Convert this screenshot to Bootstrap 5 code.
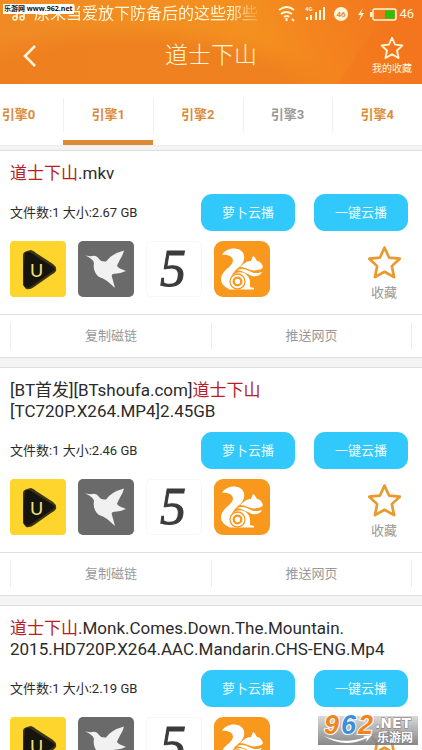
<!DOCTYPE html>
<html lang="zh-CN">
<head>
<meta charset="utf-8">
<meta name="viewport" content="width=device-width, initial-scale=1">
<title>道士下山</title>
<link href="https://cdn.jsdelivr.net/npm/bootstrap@5.3.0/dist/css/bootstrap.min.css" rel="stylesheet">
<style>
  body { font-family: Roboto, "Noto Sans CJK SC", sans-serif; background: #f4f4f4; color: #2b2b2b; }
  .app-head { color: #fff6d8; background:
      linear-gradient(125deg, transparent 82%, #f4711c55 82.5%),
      linear-gradient(40deg, transparent 62%, #ef701d66 90%),
      radial-gradient(ellipse at 30% 130%, #ee7d1fcc 0 42%, transparent 55%),
      linear-gradient(90deg, #f08a24, #f4901f 60%, #f57a1e); }
  .status { height: 28px; font-size: 13px; line-height: 28px; }
  .ticker { width: 258px; padding-left: 12px; font-size: 16px; font-weight: 400; white-space: nowrap;
      -webkit-mask-image: linear-gradient(90deg, #000 88%, #0003); mask-image: linear-gradient(90deg, #000 88%, #0003); }
  .site-tag { top: 4px; left: 3px; height: 10px; padding: 0 1px; background: #fff; color: #111;
      font: bold 7px/10px "Open Sans", "Noto Sans CJK SC", sans-serif; white-space: nowrap; }
  .title-bar { height: 56px; }
  .title-bar h1 { font-size: 23px; line-height: 56px; font-weight: 300; }
  .side { width: 60px; color: inherit; }
  .fav-top { font-size: 10px; line-height: 18px; }
  .tabs { height: 62px; background: #fff; border-bottom: 1px solid #ececec; }
  .tab-item { flex: 0 0 21.25%; padding-top: 6px; font-size: 13px; font-weight: 700; color: #db8a38; border-bottom: 5px solid transparent; }
  .tab-item + .tab-item { background: linear-gradient(#f0f0f0, #f0f0f0) 0 14px / 1px 34px no-repeat; }
  .tab-item.current { border-bottom-color: #dd8a35; }
  .tab-item.muted { color: #999; }
  .entries { gap: 9px; padding-top: 4px; }
  .entry { background: #fff; border-top: 1px solid #dedede; border-bottom: 1px solid #dedede; }
  .entry-main { padding: 12px 10px; }
  .entry h2 { font-size: 17px; line-height: 21px; font-weight: 400; margin-bottom: 10px; }
  .entry h2 em { color: #b92025; font-style: normal; }
  .meta { font-size: 13px; }
  .actions { gap: 19px; margin-right: 4px; }
  .play { width: 94px; height: 37px; border: 0; border-radius: 11px; background: #31c8fb; color: #e9fbff; font-size: 13px; }
  .apps { gap: 12px; margin-top: 10px; }
  .app-btn, .app-btn svg { width: 56px; height: 56px; }
  .fav { width: 50px; color: #999; font-size: 13px; line-height: 18px; margin-right: 3px; padding-top: 14px; gap: 4px; }
  .entry-foot { height: 43px; margin: 0; border-top: 1px solid #dedede; padding: 0 10px; }
  .foot-btn { border: 0; border-left: 1px solid #ececec; height: 26px; background: none; color: #999; font-size: 13px; }
  .foot-btn:last-child { border-right: 1px solid #ececec; }
  .brand { right: 4px; bottom: 5px; width: 100px; height: 33px; overflow: visible; }
</style>
<script src="https://cdn.jsdelivr.net/npm/bootstrap@5.3.0/dist/js/bootstrap.bundle.min.js"></script>
</head>
<body>
<svg class="d-none" aria-hidden="true">
  <symbol id="star" viewBox="0 0 34 34">
    <path d="M17 2.500l4.400 9.700 10.400 1.100-7.700 7.200 2.200 10.700-9.300-5.200-9.300 5.200 2.200-10.700-7.700-7.200 10.400-1.100z" fill="none" stroke="currentColor" stroke-width="2.600" stroke-linejoin="round"/>
  </symbol>
  <symbol id="app-u" viewBox="0 0 56 56">
    <rect width="56" height="56" rx="4" fill="#fdd52c"/>
    <path d="M13 14q0-3 4-4l4-1q3 1 5 3l17 11q4 3 3 7-1 2-5 4L24 46q-4 3-8 2l-3-4z" fill="#3d3414"/>
    <path d="M15 12q3-2 6 0l22 14q3 2 0 4L20 46q-3 2-6-1-1-16 1-33z" fill="#15140f"/>
    <text x="26.500" y="36" text-anchor="middle" font-family="Lato, sans-serif" font-size="18" fill="#f5e27a">U</text>
  </symbol>
  <symbol id="app-bird" viewBox="0 0 56 56">
    <rect width="56" height="56" rx="5" fill="#6a6a6a"/>
    <path d="M7 14.500L13 15.200Q18 13.500 21 18Q23 21 28 20.500Q33 13 46 9.500Q45 14 42 18.500L39 24.500Q39 26 42 27.500L48 30Q42 33 35 33Q33 34 34 36L37 47L32 42.500Q28 39 25 37.500Q19 36 17 31Q15 27 16 22Q15 17.500 7 14.500z" fill="#f1f1f1"/>
  </symbol>
  <symbol id="app-five" viewBox="0 0 56 56">
    <rect x=".5" y=".5" width="55" height="55" rx="4" fill="#fff" stroke="#f7f7f7"/>
    <text x="27" y="45" text-anchor="middle" font-family="'Liberation Serif', serif" font-style="italic" font-size="52" fill="#3b3b3b" stroke="#3b3b3b">5</text>
  </symbol>
  <symbol id="app-uc" viewBox="0 0 56 56">
    <rect width="56" height="56" rx="9" fill="#f8981d"/>
    <path d="M8 14C12 6 27 5 30 14c1 6-2 10-6 13-5 4-8 9-7 15l-2 6C6 44 5 37 10 31c3-4 8-6 9-11 0-5-6-7-11-6z" fill="#fff"/>
    <path d="M26 26c4-3 6-6 11-6l2-5c2 1 3 3 4 5 3 0 5 3 6 6-1 2-3 3-6 3-6 2-11-3-17-3z" fill="#fff"/>
    <path d="M23 29c8-3 12 2 17 3 3 0 5 0 8-1-2 4-6 5-10 4-5-2-9-5-15-6z" fill="#fff"/>
    <path d="M16 42c-1-13 18-15 20-2v6l4 1v1.500H15z" fill="#fff"/>
    <circle cx="23.500" cy="40.500" r="7.500" fill="#fff" stroke="#f8981d" stroke-width="1.300"/>
    <circle cx="23.500" cy="40.500" r="3.800" fill="none" stroke="#f8981d" stroke-width="2.300"/>
  </symbol>
</svg>

<div class="vh-100 overflow-hidden position-relative">
  <header class="app-head">
    <div class="status d-flex align-items-center position-relative">
      <div class="ticker overflow-hidden flex-shrink-0 d-flex align-items-center">
        <svg width="14" height="14" viewBox="0 0 14 14" class="me-2 flex-shrink-0" fill="none" stroke="currentColor" stroke-width="1.500"><circle cx="3" cy="11" r="2"/><circle cx="10" cy="11" r="2"/><path d="M5 11V3l7-1v9"/></svg>
        <span>原来当爱放下防备后的这些那些</span>
      </div>
      <svg class="flex-shrink-0 ms-auto" width="121" height="24" viewBox="0 0 121 24" fill="none" stroke="currentColor" aria-hidden="true">
        <g stroke-width="2"><path d="M1 8q8-6 15 0M3 12q5-4 11 0M6 15q3-2 5 0"/></g>
        <path d="M8.500 16v3M14 17l2 2" stroke-width="2"/>
        <path d="M29 18v-3M33 18v-5M38 18V10M42 18V8M46 18V5" stroke-width="2"/>
        <text x="27" y="9" font-size="6" font-weight="700" fill="currentColor" stroke="none" font-family="Roboto">4G</text>
        <circle cx="63" cy="12" r="7" fill="currentColor" stroke="none"/>
        <text x="63" y="15" text-anchor="middle" font-size="8" font-weight="700" fill="#ee8a30" stroke="none" font-family="Roboto">46</text>
        <path d="M85 6l-5 7h3l-2 6 5-8h-3z" fill="currentColor" stroke="none"/>
        <rect x="95" y="7" width="23" height="11" rx="2" stroke-width="1.500"/>
        <path d="M93 10v5" stroke-width="2"/>
        <path d="M107 8.500h9.500v8H107z" fill="#25c40b" stroke="none"/>
      </svg>
      <span class="me-2">46</span>
      <span class="site-tag position-absolute">乐游网 www.962.net</span>
    </div>
    <div class="title-bar d-flex justify-content-between">
      <button class="side btn border-0 p-0" aria-label="返回">
        <svg width="14" height="24" viewBox="0 0 14 24" fill="none" stroke="currentColor" stroke-width="2.500"><path d="M12 2L2 12l10 10"/></svg>
      </button>
      <h1 class="m-0">道士下山</h1>
      <a href="#" class="side fav-top d-flex flex-column align-items-center text-decoration-none pt-2 text-nowrap">
        <svg width="24" height="24" class="flex-shrink-0"><use href="#star"/></svg>我的收藏
      </a>
    </div>
  </header>

  <nav class="tabs d-flex justify-content-end overflow-hidden">
    <a href="#" class="tab-item d-flex align-items-center justify-content-center text-decoration-none">引擎0</a>
    <a href="#" class="tab-item current d-flex align-items-center justify-content-center text-decoration-none" aria-current="page">引擎1</a>
    <a href="#" class="tab-item d-flex align-items-center justify-content-center text-decoration-none">引擎2</a>
    <a href="#" class="tab-item muted d-flex align-items-center justify-content-center text-decoration-none">引擎3</a>
    <a href="#" class="tab-item d-flex align-items-center justify-content-center text-decoration-none">引擎4</a>
  </nav>

  <main class="entries d-flex flex-column">
    <article class="entry">
      <div class="entry-main">
        <h2><em>道士下山</em>.mkv</h2>
        <div class="d-flex align-items-center justify-content-between">
          <span class="meta">文件数:1 大小:2.67 GB</span>
          <div class="actions d-flex"><button class="play">萝卜云播</button><button class="play">一键云播</button></div>
        </div>
        <div class="d-flex justify-content-between">
          <div class="apps d-flex">
            <button class="app-btn btn p-0 border-0 d-flex" aria-label="播放器"><svg><use href="#app-u"/></svg></button>
            <button class="app-btn btn p-0 border-0 d-flex" aria-label="迅雷"><svg><use href="#app-bird"/></svg></button>
            <button class="app-btn btn p-0 border-0 d-flex" aria-label="五"><svg><use href="#app-five"/></svg></button>
            <button class="app-btn btn p-0 border-0 d-flex" aria-label="浏览器"><svg><use href="#app-uc"/></svg></button>
          </div>
          <button class="fav btn border-0 px-0 pb-0 d-flex flex-column align-items-center"><svg width="35" height="35" color="#e99a2c"><use href="#star"/></svg>收藏</button>
        </div>
      </div>
      <div class="entry-foot d-flex align-items-center"><button class="foot-btn w-50 p-0">复制磁链</button><button class="foot-btn w-50 p-0">推送网页</button></div>
    </article>

    <article class="entry">
      <div class="entry-main">
        <h2>[BT首发][BTshoufa.com]<em>道士下山</em><br>[TC720P.X264.MP4]2.45GB</h2>
        <div class="d-flex align-items-center justify-content-between">
          <span class="meta">文件数:1 大小:2.46 GB</span>
          <div class="actions d-flex"><button class="play">萝卜云播</button><button class="play">一键云播</button></div>
        </div>
        <div class="d-flex justify-content-between">
          <div class="apps d-flex">
            <button class="app-btn btn p-0 border-0 d-flex" aria-label="播放器"><svg><use href="#app-u"/></svg></button>
            <button class="app-btn btn p-0 border-0 d-flex" aria-label="迅雷"><svg><use href="#app-bird"/></svg></button>
            <button class="app-btn btn p-0 border-0 d-flex" aria-label="五"><svg><use href="#app-five"/></svg></button>
            <button class="app-btn btn p-0 border-0 d-flex" aria-label="浏览器"><svg><use href="#app-uc"/></svg></button>
          </div>
          <button class="fav btn border-0 px-0 pb-0 d-flex flex-column align-items-center"><svg width="35" height="35" color="#e99a2c"><use href="#star"/></svg>收藏</button>
        </div>
      </div>
      <div class="entry-foot d-flex align-items-center"><button class="foot-btn w-50 p-0">复制磁链</button><button class="foot-btn w-50 p-0">推送网页</button></div>
    </article>

    <article class="entry">
      <div class="entry-main">
        <h2><em>道士下山</em>.Monk.Comes.Down.The.Mountain.<br>2015.HD720P.X264.AAC.Mandarin.CHS-ENG.Mp4</h2>
        <div class="d-flex align-items-center justify-content-between">
          <span class="meta">文件数:1 大小:2.19 GB</span>
          <div class="actions d-flex"><button class="play">萝卜云播</button><button class="play">一键云播</button></div>
        </div>
        <div class="d-flex justify-content-between">
          <div class="apps d-flex">
            <button class="app-btn btn p-0 border-0 d-flex" aria-label="播放器"><svg><use href="#app-u"/></svg></button>
            <button class="app-btn btn p-0 border-0 d-flex" aria-label="迅雷"><svg><use href="#app-bird"/></svg></button>
            <button class="app-btn btn p-0 border-0 d-flex" aria-label="五"><svg><use href="#app-five"/></svg></button>
            <button class="app-btn btn p-0 border-0 d-flex" aria-label="浏览器"><svg><use href="#app-uc"/></svg></button>
          </div>
          <button class="fav btn border-0 px-0 pb-0 d-flex flex-column align-items-center" aria-label="收藏"><svg width="35" height="35" color="#e99a2c"><use href="#star"/></svg></button>
        </div>
      </div>
    </article>
  </main>

  <svg class="brand position-absolute" viewBox="0 0 100 33" role="img" aria-label="962.NET 乐游网">
    <defs><linearGradient id="steel" x2="0" y2="1"><stop stop-color="#d4d4d4"/><stop offset="1" stop-color="#777"/></linearGradient></defs>
    <rect y="4" width="100" height="29" fill="url(#steel)" fill-opacity=".88"/>
    <g font-family="'Liberation Sans', sans-serif" font-weight="700" font-style="italic" font-size="27" stroke="#fff" stroke-width="2" paint-order="stroke">
      <text x="6" y="22" fill="#f28420">9</text><text x="23" y="22" fill="#3a8fd8">6</text><text x="40" y="22" fill="#f28420">2</text>
    </g>
    <path d="M6 24q20 13 43 2l-1 4 6-7-9 1 2 1q-20 8-41-1z" fill="#fff"/>
    <g fill="#fff" stroke="#777" stroke-width="1" paint-order="stroke" font-weight="700">
      <text x="57" y="16" font-family="'DejaVu Sans', sans-serif" font-size="14">.NET</text>
      <text x="59" y="30" font-family="'Noto Sans CJK SC', sans-serif" font-size="12">乐游网</text>
    </g>
  </svg>
</div>
</body>
</html>
